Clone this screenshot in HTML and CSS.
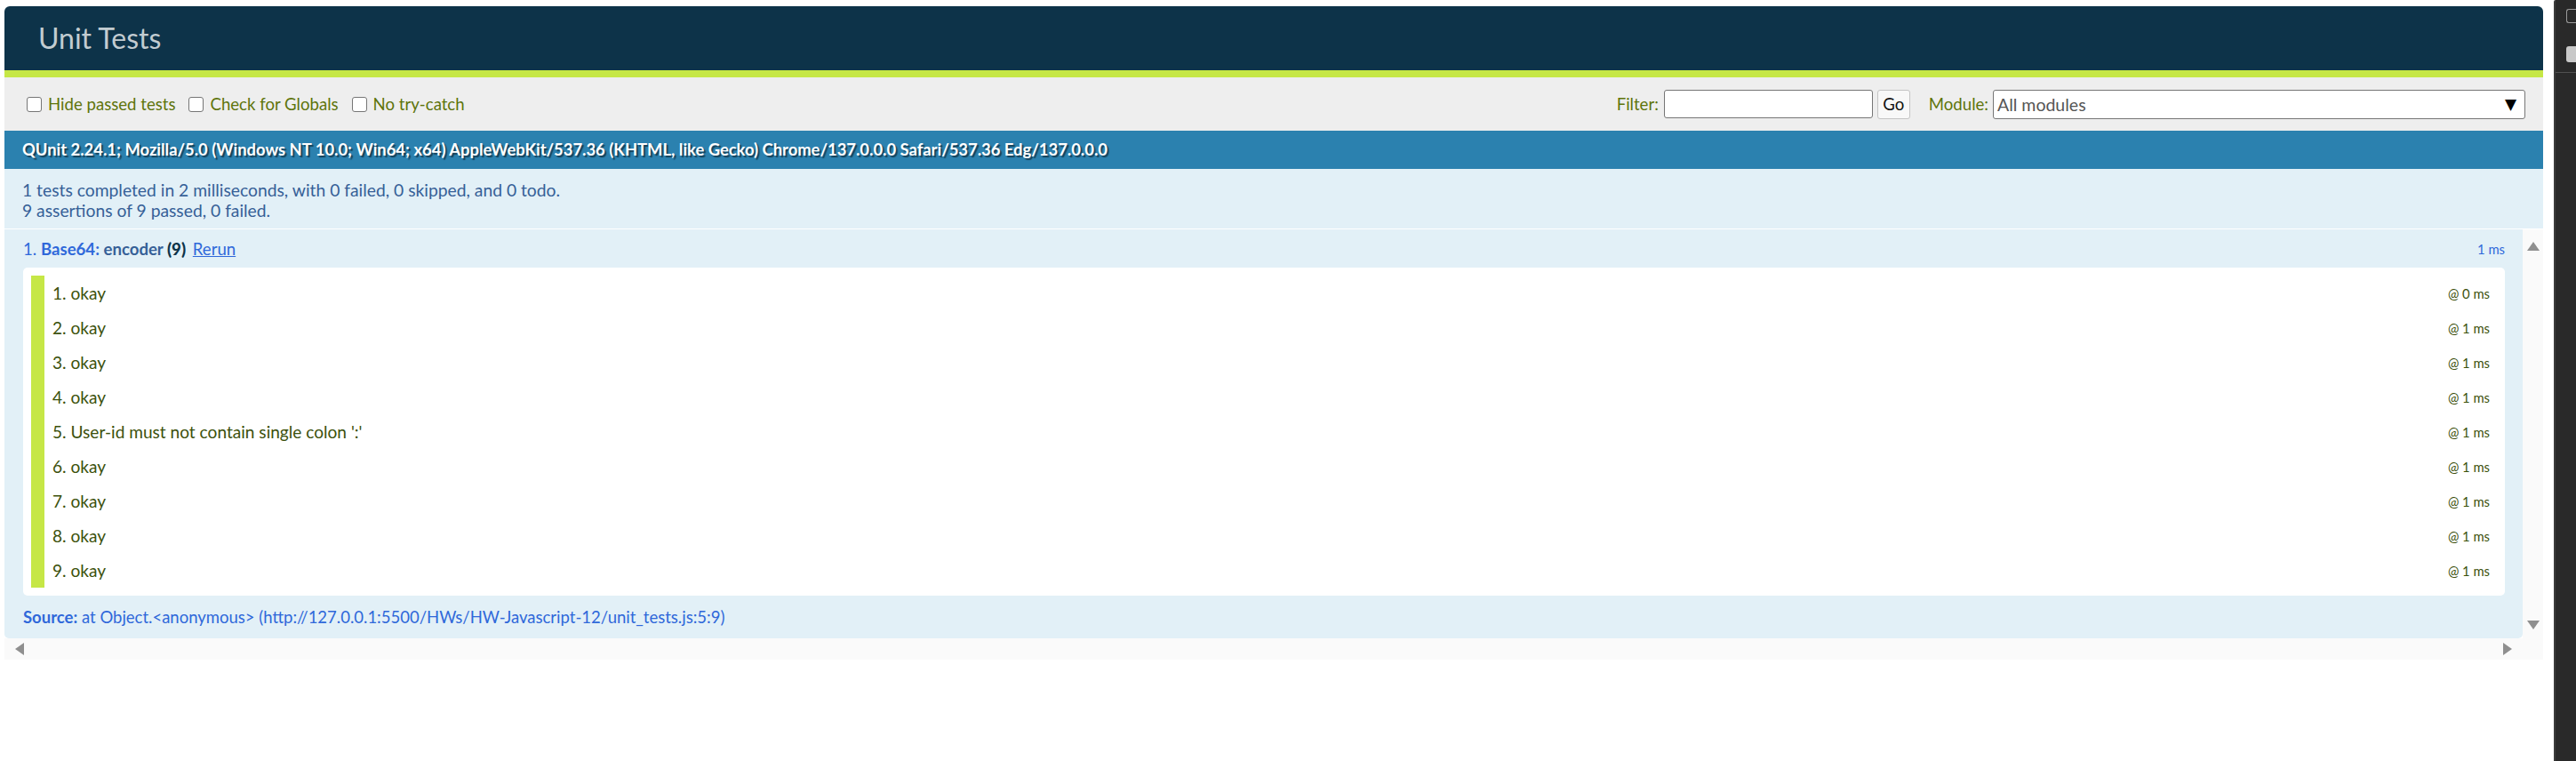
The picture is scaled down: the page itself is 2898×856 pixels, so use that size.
FILE: index.html
```html
<!DOCTYPE html>
<html lang="en">
<head>
<meta charset="utf-8">
<title>Unit Tests</title>
<link rel="stylesheet" href="styles.css">
</head>
<body>
<div class="qunit">
  <h1 class="header">Unit Tests</h1>
  <div class="banner"></div>
  <div class="toolbar">
    <div class="opts">
      <label class="opt"><span class="cb"></span>Hide passed tests</label>
      <label class="opt"><span class="cb"></span>Check for Globals</label>
      <label class="opt"><span class="cb"></span>No try-catch</label>
    </div>
    <div class="filters">
      <span class="flabel">Filter:</span>
      <span class="finput"></span>
      <span class="gobtn">Go</span>
      <span class="flabel mlabel">Module:</span>
      <span class="select"><span class="ph">All modules</span><span class="arrow">&#9660;</span></span>
    </div>
  </div>
  <div class="ua">QUnit 2.24.1; Mozilla/5.0 (Windows NT 10.0; Win64; x64) AppleWebKit/537.36 (KHTML, like Gecko) Chrome/137.0.0.0 Safari/537.36 Edg/137.0.0.0</div>
  <div class="result">
    <div>1 tests completed in 2 milliseconds, with 0 failed, 0 skipped, and 0 todo.</div>
    <div>9 assertions of 9 passed, 0 failed.</div>
  </div>
  <div class="tests">
    <div class="viewport">
      <div class="test">
        <div class="test-head">
          <span class="head-left"><span class="tnum">1.</span> <strong><span class="mod">Base64:</span> <span class="tname">encoder</span> <b class="counts">(9)</b></strong> <a class="rerun">Rerun</a></span>
          <span class="runtime">1 ms</span>
        </div>
        <ol class="asserts">
          <li class="assert"><span class="msg">1. okay</span><span class="atime">@ 0 ms</span></li>
          <li class="assert"><span class="msg">2. okay</span><span class="atime">@ 1 ms</span></li>
          <li class="assert"><span class="msg">3. okay</span><span class="atime">@ 1 ms</span></li>
          <li class="assert"><span class="msg">4. okay</span><span class="atime">@ 1 ms</span></li>
          <li class="assert"><span class="msg">5. User-id must not contain single colon ':'</span><span class="atime">@ 1 ms</span></li>
          <li class="assert"><span class="msg">6. okay</span><span class="atime">@ 1 ms</span></li>
          <li class="assert"><span class="msg">7. okay</span><span class="atime">@ 1 ms</span></li>
          <li class="assert"><span class="msg">8. okay</span><span class="atime">@ 1 ms</span></li>
          <li class="assert"><span class="msg">9. okay</span><span class="atime">@ 1 ms</span></li>
        </ol>
        <div class="source"><b>Source:</b> at Object.&lt;anonymous&gt; (http://127.0.0.1:5500/HWs/HW-Javascript-12/unit_tests.js:5:9)</div>
      </div>
    </div>
    <div class="vbar"><span class="arr up"></span><span class="arr down"></span></div>
    <div class="hbar"><span class="arr left"></span><span class="arr right"></span></div>
    <div class="corner"></div>
  </div>
</div>
<div class="strip">
  <div class="s1"></div>
  <div class="s2">
    <div class="ico-outline"></div>
    <div class="ico-fill"></div>
    <div class="sline"></div>
  </div>
</div>
</body>
</html>
```
FILE: styles.css
```css
html, body {
  margin: 0;
  padding: 0;
}
body {
  background: #fff;
  display: flex;
  height: 856px;
  overflow: hidden;
  font-family: Lato, "Noto Sans", sans-serif;
}
.qunit {
  width: 2856px;
  margin: 7px 0 0 5px;
  align-self: flex-start;
  flex: none;
}
.header {
  margin: 0;
  height: 72px;
  background: #0D3349;
  border-radius: 6px 6px 0 0;
  color: #C2CCD1;
  font-weight: 400;
  font-size: 32px;
  line-height: 72px;
  padding-left: 38px;
}
.banner {
  height: 8px;
  background: #C6E746;
}
.toolbar {
  height: 60px;
  background: #EEE;
  display: flex;
  align-items: center;
  justify-content: space-between;
  padding: 0 20px 0 25px;
  font-size: 18.6px;
}
.opts {
  display: flex;
  align-items: center;
  gap: 15px;
}
.opt {
  display: flex;
  align-items: center;
  color: #5E740B;
}
.cb {
  width: 17px;
  height: 17px;
  box-sizing: border-box;
  border: 1px solid #767676;
  border-radius: 3px;
  background: #fff;
  margin-right: 7px;
}
.filters {
  display: flex;
  align-items: center;
}
.flabel {
  color: #5E740B;
  margin-right: 6px;
}
.mlabel {
  margin-left: 21px;
  margin-right: 5px;
}
.finput {
  width: 235px;
  height: 32px;
  box-sizing: border-box;
  border: 1px solid #767676;
  border-radius: 3px;
  background: #fff;
}
.gobtn {
  width: 37px;
  height: 33px;
  box-sizing: border-box;
  margin-left: 5px;
  border: 1px solid #c4c4c4;
  border-radius: 3px;
  background: #f8f8f8;
  color: #111;
  display: flex;
  align-items: center;
  justify-content: center;
}
.select {
  width: 599px;
  height: 33px;
  box-sizing: border-box;
  border: 1px solid #767676;
  border-radius: 3px;
  background: #fff;
  display: flex;
  align-items: center;
  justify-content: space-between;
  padding: 0 9px 0 4px;
}
.ph {
  color: #555;
  font-size: 19.5px;
}
.arrow {
  color: #000;
  font-size: 17px;
  font-family: "DejaVu Sans", sans-serif;
}
.ua {
  height: 43px;
  line-height: 43px;
  background: #2B81AF;
  color: #fff;
  font-weight: 700;
  font-size: 18.4px;
  padding-left: 20px;
  text-shadow: rgba(0, 0, 0, 0.5) 2px 2px 1px;
  white-space: nowrap;
}
.result {
  background: #E2F0F7;
  color: #366097;
  font-size: 19.3px;
  line-height: 23px;
  padding: 12px 20px 9px 20px;
  border-bottom: 1px solid #fff;
}
.tests {
  display: grid;
  grid-template-columns: 1fr 23px;
  grid-template-rows: auto 24px;
  font-size: 18.6px;
}
.viewport {
  min-width: 0;
}
.test {
  background: #E2F0F7;
  padding: 12px 20px 12px 21px;
  border-radius: 0 0 5px 5px;
}
.test-head {
  display: flex;
  justify-content: space-between;
  align-items: center;
  height: 21px;
  line-height: 21px;
}
.tnum {
  color: #2F68DA;
}
.mod {
  color: #2F68DA;
}
.tname {
  color: #366097;
}
.counts {
  color: #0D3349;
}
.rerun {
  color: #2F68DA;
  text-decoration: underline;
  margin-left: 3px;
}
.runtime {
  color: #2F68DA;
  font-size: 14.8px;
}
.asserts {
  margin: 10px 0 0;
  padding: 9px;
  list-style: none;
  background: #fff;
  border-radius: 5px;
}
.assert {
  border-left: 15px solid #C6E746;
  height: 39px;
  padding: 0 8px 0 9px;
  display: flex;
  align-items: center;
  justify-content: space-between;
  color: #3C510C;
  font-size: 19.1px;
}
.atime {
  font-size: 14.8px;
  color: #3C510C;
}
.source {
  margin-top: 12px;
  line-height: 24px;
  color: #2F68DA;
  font-size: 18.5px;
}
.vbar {
  background: #FAFAFA;
  display: flex;
  flex-direction: column;
  align-items: center;
  justify-content: space-between;
  padding: 14px 0 10px;
}
.hbar {
  background: #FAFAFA;
  display: flex;
  align-items: center;
  justify-content: space-between;
  padding: 0 12px 0 12px;
}
.corner {
  background: #FAFAFA;
}
.arr {
  width: 0;
  height: 0;
  display: block;
}
.up {
  border-left: 7.5px solid transparent;
  border-right: 7.5px solid transparent;
  border-bottom: 10px solid #8f8f8f;
}
.down {
  border-left: 7.5px solid transparent;
  border-right: 7.5px solid transparent;
  border-top: 10px solid #8f8f8f;
}
.left {
  border-top: 7px solid transparent;
  border-bottom: 7px solid transparent;
  border-right: 10px solid #8f8f8f;
}
.right {
  border-top: 7px solid transparent;
  border-bottom: 7px solid transparent;
  border-left: 10px solid #8f8f8f;
}
.strip {
  margin-left: 12px;
  width: 25px;
  flex: none;
  display: flex;
  height: 856px;
}
.s1 {
  width: 9px;
  background: #3b3b3b;
  border-radius: 4px 0 0 0;
}
.s2 {
  flex: 1;
  background: #292929;
  padding-top: 10px;
}
.ico-outline {
  margin-left: 12px;
  width: 10px;
  height: 14px;
  border: 1px solid #9a9a9a;
  border-right: none;
  border-radius: 3px 0 0 3px;
}
.ico-fill {
  margin: 26px 0 0 12px;
  height: 18px;
  background: #c8c8c8;
  border-radius: 3px 0 0 3px;
}
.sline {
  margin-top: 11px;
  height: 1px;
  background: #505050;
}
```
